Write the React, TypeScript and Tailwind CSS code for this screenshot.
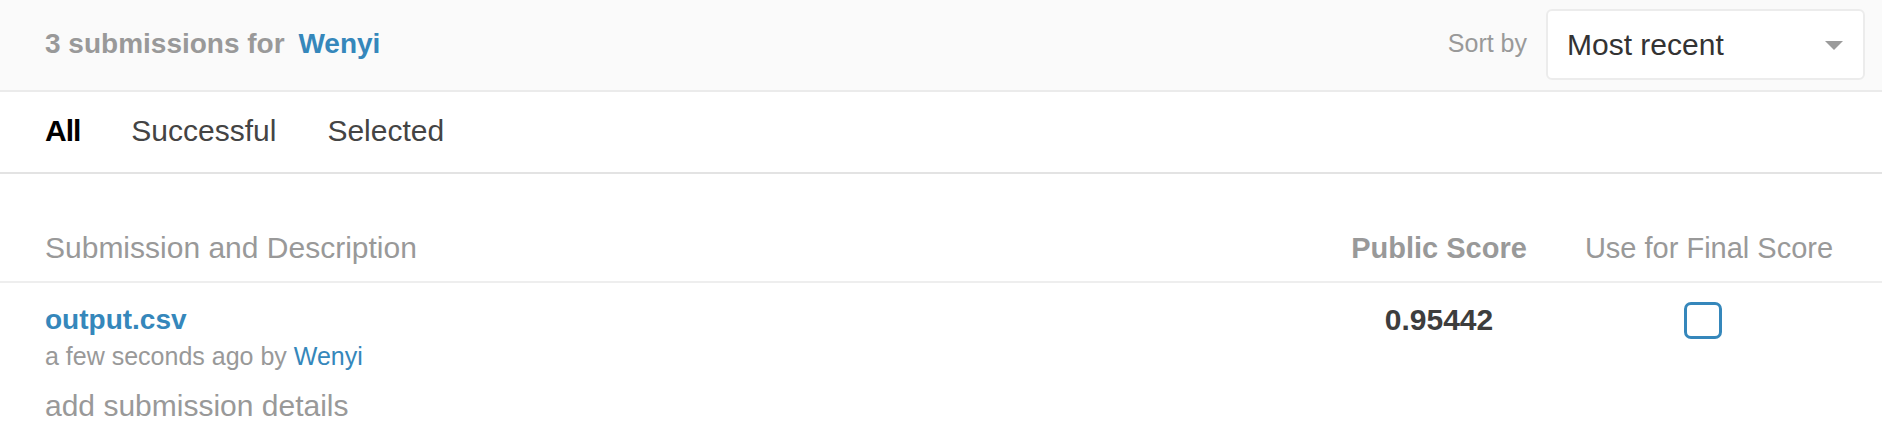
import { useState } from 'react';

const tabs = ['All', 'Successful', 'Selected'];

export default function App() {
  const [active, setActive] = useState('All');
  const [useFinal, setUseFinal] = useState(false);

  return (
    <div className="min-h-screen bg-white font-['Liberation_Sans',Arial,sans-serif]">
      {/* Header */}
      <header className="flex h-[92px] items-center justify-between border-b-2 border-[#ebebeb] bg-[#fafafa] pl-[45px] pr-[17px] pb-[2px]">
        <h2 className="text-[28px] font-bold text-[#999]">
          3 submissions for <a href="#" className="ml-[6px] text-[#3587bb]">Wenyi</a>
        </h2>
        <div className="flex items-center gap-[19px]">
          <span className="text-[25px] text-[#999]">Sort by</span>
          <button className="flex h-[71px] w-[319px] items-center justify-between rounded-[6px] border-2 border-[#ececec] bg-white pl-[19px] pr-[20px] text-[30px] text-[#333]">
            Most recent
            <svg width="18" height="9" viewBox="0 0 18 9" className="mt-[2px]">
              <path d="M0 0h18L9 9z" fill="#9b9b9b" />
            </svg>
          </button>
        </div>
      </header>

      {/* Tabs */}
      <nav className="flex h-[82px] items-center gap-[51px] border-b-2 border-[#e3e3e3] pb-[4px] pl-[45px]">
        {tabs.map((t) => (
          <button
            key={t}
            onClick={() => setActive(t)}
            className={
              active === t
                ? 'text-[30px] font-bold tracking-[-1px] text-black'
                : 'text-[30px] text-[#444]'
            }
          >
            {t}
          </button>
        ))}
      </nav>

      {/* Table */}
      <div className="pt-[56px]">
        <div className="grid grid-cols-[1fr_190px_270px] gap-x-[40px] border-b-2 border-[#eeeeee] pl-[45px] pr-[38px] pb-[15px]">
          <div className="text-[30px] leading-[36px] text-[#999]">Submission and Description</div>
          <div className="text-center text-[29px] font-bold leading-[36px] text-[#999]">Public Score</div>
          <div className="text-center text-[29px] leading-[36px] text-[#999]">Use for Final Score</div>
        </div>

        <div className="grid grid-cols-[1fr_190px_270px] gap-x-[40px] pl-[45px] pr-[38px] pt-[19px]">
          <div>
            <a href="#" className="block text-[28px] font-bold leading-[36px] text-[#3587bb]">
              output.csv
            </a>
            <div className="mt-[3px] text-[25px] leading-[30px] text-[#999]">
              a few seconds ago by <a href="#" className="text-[#3587bb]">Wenyi</a>
            </div>
            <div className="mt-[17px] text-[30px] leading-[36px] text-[#999]">add submission details</div>
          </div>
          <div className="text-center text-[30px] font-bold leading-[36px] text-[#3d3d3d]">0.95442</div>
          <div className="flex justify-center pr-[12px]">
            <button
              onClick={() => setUseFinal(!useFinal)}
              className="h-[37px] w-[38px] rounded-[7px] border-[3px] border-[#3587bb] bg-white"
              aria-checked={useFinal}
            />
          </div>
        </div>
      </div>
    </div>
  );
}
